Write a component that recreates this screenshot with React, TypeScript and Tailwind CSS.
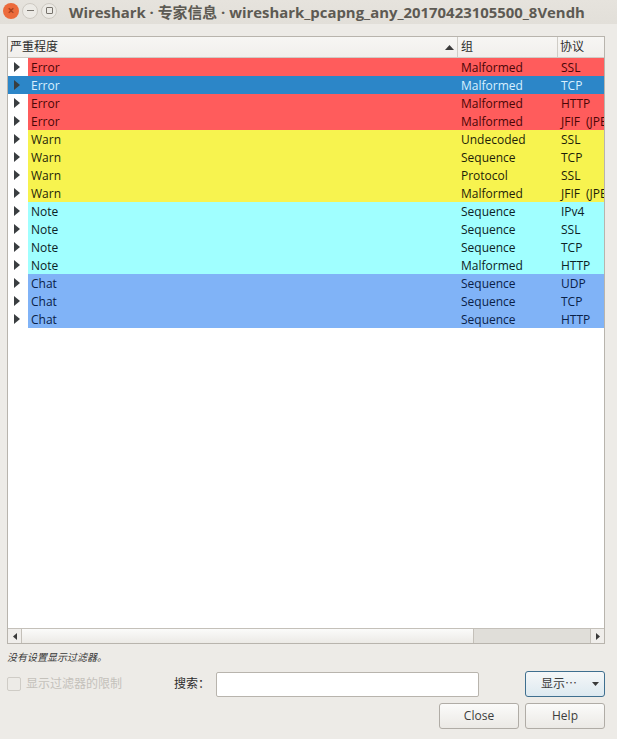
const FONT = "font-['Open_Sans','Noto_Sans_CJK_SC',sans-serif]";

const rows = [
  { sev: 'Error', group: 'Malformed', proto: 'SSL' },
  { sev: 'Error', group: 'Malformed', proto: 'TCP', selected: true },
  { sev: 'Error', group: 'Malformed', proto: 'HTTP' },
  { sev: 'Error', group: 'Malformed', proto: 'JFIF (JPEG)' },
  { sev: 'Warn', group: 'Undecoded', proto: 'SSL' },
  { sev: 'Warn', group: 'Sequence', proto: 'TCP' },
  { sev: 'Warn', group: 'Protocol', proto: 'SSL' },
  { sev: 'Warn', group: 'Malformed', proto: 'JFIF (JPEG)' },
  { sev: 'Note', group: 'Sequence', proto: 'IPv4' },
  { sev: 'Note', group: 'Sequence', proto: 'SSL' },
  { sev: 'Note', group: 'Sequence', proto: 'TCP' },
  { sev: 'Note', group: 'Malformed', proto: 'HTTP' },
  { sev: 'Chat', group: 'Sequence', proto: 'UDP' },
  { sev: 'Chat', group: 'Sequence', proto: 'TCP' },
  { sev: 'Chat', group: 'Sequence', proto: 'HTTP' },
];

const sevColors: Record<string, string> = {
  Error: 'bg-[#ff5c5c] text-[#4a0606]',
  Warn: 'bg-[#f7f34f] text-[#1e1e08]',
  Note: 'bg-[#a0ffff] text-[#0c2226]',
  Chat: 'bg-[#80b3f7] text-[#0a2148]',
};

function Row({ sev, group, proto, selected }: { sev: string; group: string; proto: string; selected?: boolean }) {
  const color = selected ? 'bg-[#2c86c8] text-[#d8f0ff]' : sevColors[sev];
  return (
    <div className={`flex h-[18px] items-center text-[12px] leading-[18px] ${selected ? 'bg-[#2c86c8]' : 'bg-white'}`}>
      <div className="flex w-5 shrink-0 justify-center pr-[2px]">
        <svg width="6" height="10" viewBox="0 0 6 10">
          <path d="M0 0 L6 5 L0 10 Z" fill="#3a3e40" />
        </svg>
      </div>
      <div className={`flex h-full min-w-0 flex-1 pt-px ${color}`}>
        <div className="w-[429px] shrink-0 pl-[3px]">{sev}</div>
        <div className="w-[100px] shrink-0 pl-1">{group}</div>
        <div className="min-w-0 flex-1 overflow-hidden whitespace-nowrap pl-1 [word-spacing:3px]">{proto}</div>
      </div>
    </div>
  );
}

function Button({ children }: { children: React.ReactNode }) {
  return (
    <button className="flex h-[26px] w-20 items-center justify-center rounded-[3px] border border-[#b0aca6] bg-gradient-to-b from-[#fbfbfa] to-[#ebe9e5] text-[12px] text-[#3c3c3c]">
      {children}
    </button>
  );
}

export default function App() {
  return (
    <div className={`flex h-[739px] w-[617px] flex-col overflow-hidden bg-[#edebe7] ${FONT}`}>
      {/* title bar */}
      <div className="flex h-[24px] items-center bg-gradient-to-b from-[#e6e3dd] to-[#e2dfd9] pl-[3px]">
        <div className="mb-[3px] flex h-4 w-4 items-center justify-center rounded-full bg-[#ec6b3c] text-[12px] font-bold leading-none text-[#a8401c]">×</div>
        <div className="mb-[3px] ml-[3px] flex h-4 w-4 items-center justify-center rounded-full border border-[#cdc9c2] bg-[#eceae5]">
          <div className="h-px w-[7px] bg-[#77736d]" />
        </div>
        <div className="mb-[3px] ml-[3px] flex h-4 w-4 items-center justify-center rounded-full border border-[#cdc9c2] bg-[#eceae5]">
          <div className="h-[7px] w-[7px] rounded-[1px] border border-[#77736d]" />
        </div>
        <div className="ml-[12px] whitespace-nowrap text-[14.9px] font-bold text-[#5d5a53]">
          Wireshark · 专家信息 · wireshark_pcapng_any_20170423105500_8Vendh
        </div>
      </div>

      <div className="flex flex-1 flex-col pl-[7px] pr-3 pt-3">
        {/* tree */}
        <div className="flex h-[608px] flex-col border border-[#b8b4ad] bg-white">
          <div className="flex h-[21px] shrink-0 border-b border-[#cfccc6] bg-gradient-to-b from-[#f7f6f4] to-[#f1efec] text-[12px] leading-[20px] text-[#2c2c2c]">
            <div className="flex w-[450px] shrink-0 items-center justify-between border-r border-[#cfccc6] pl-[2px] pr-[3px]">
              <span>严重程度</span>
              <svg width="9" height="5" viewBox="0 0 9 5">
                <path d="M0 5 L4.5 0 L9 5 Z" fill="#3a3a3a" />
              </svg>
            </div>
            <div className="w-[100px] shrink-0 border-r border-[#cfccc6] pl-[3px]">组</div>
            <div className="flex-1 pl-[2px]">协议</div>
          </div>

          <div className="min-h-0 flex-1">
            {rows.map((row, i) => (
              <Row key={i} {...row} />
            ))}
          </div>

          {/* horizontal scrollbar */}
          <div className="flex h-[15px] shrink-0 border-t border-[#c4c0b9] bg-[#e0ded9]">
            <div className="flex w-[14px] shrink-0 items-center justify-center border-r border-[#c4c0b9] bg-[#f0eeeb]">
              <svg width="4" height="7" viewBox="0 0 4 7">
                <path d="M4 0 L0 3.5 L4 7 Z" fill="#3a3a3a" />
              </svg>
            </div>
            <div className="w-[452px] shrink-0 border-r border-[#c4c0b9] bg-gradient-to-b from-[#fbfbfa] to-[#eceae6]" />
            <div className="flex-1" />
            <div className="flex w-[14px] shrink-0 items-center justify-center border-l border-[#c4c0b9] bg-[#f0eeeb]">
              <svg width="4" height="7" viewBox="0 0 4 7">
                <path d="M0 0 L4 3.5 L0 7 Z" fill="#3a3a3a" />
              </svg>
            </div>
          </div>
        </div>

        <div className="mt-[6px] h-[14px] text-[10px] italic leading-[14px] text-[#3a3a3a]">没有设置显示过滤器。</div>

        <div className="mt-[7px] flex h-[26px] items-center">
          <div className="h-[14px] w-[14px] rounded-[2px] border border-[#cfccc6]" />
          <span className="ml-[5px] w-[148px] text-[12px] text-[#c4c1bb]">显示过滤器的限制</span>
          <span className="w-[42px] text-[12px] text-[#2c2c2c]">搜索：</span>
          <div className="h-[25px] w-[263px] rounded-[2px] border border-[#b8b4ad] bg-white" />
          <button className="relative ml-[46px] flex h-[26px] w-20 items-center justify-center rounded-[3px] border border-[#3f6f8f] bg-gradient-to-b from-[#f5f7f8] to-[#dde9f0] pr-3 text-[12px] text-[#3c3c3c]">
            显示⋯
            <svg width="7" height="4" viewBox="0 0 7 4" className="absolute right-[5px] top-[10px]">
              <path d="M0 0 L7 0 L3.5 4 Z" fill="#3a3a3a" />
            </svg>
          </button>
        </div>

        <div className="mt-[6px] flex justify-end gap-[6px]">
          <Button>Close</Button>
          <Button>Help</Button>
        </div>
      </div>
    </div>
  );
}
